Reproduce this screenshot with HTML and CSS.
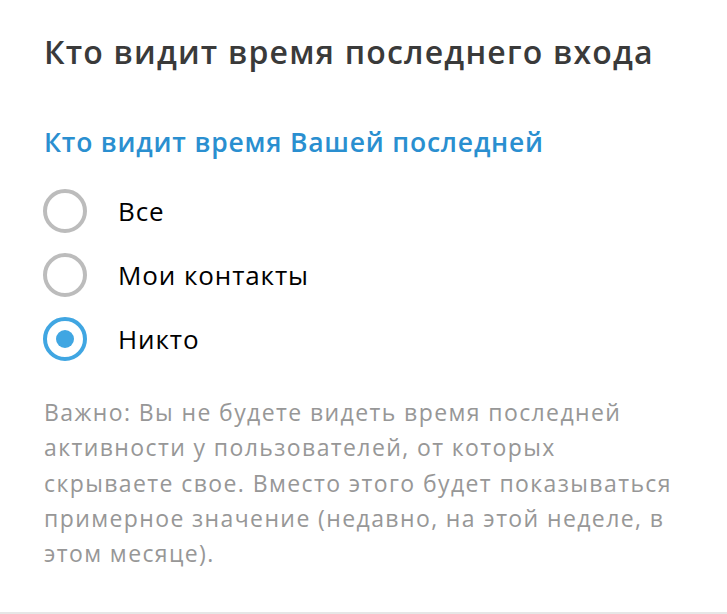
FILE: index.html
```html
<!DOCTYPE html>
<html lang="ru">
<head>
<meta charset="utf-8">
<title>Кто видит время последнего входа</title>
<link rel="stylesheet" href="styles.css">
</head>
<body>
<div class="panel">
  <h1 class="title">Кто видит время последнего входа</h1>
  <h2 class="subtitle">Кто видит время Вашей последней</h2>
  <div class="options">
    <div class="option"><span class="radio"></span><span class="label">Все</span></div>
    <div class="option"><span class="radio"></span><span class="label">Мои контакты</span></div>
    <div class="option"><span class="radio checked"></span><span class="label">Никто</span></div>
  </div>
  <p class="note">Важно: Вы не будете видеть время последней активности у пользователей, от которых скрываете свое. Вместо этого будет показываться примерное значение (недавно, на этой неделе, в этом месяце).</p>
</div>
</body>
</html>
```
FILE: styles.css
```css
html, body {
  margin: 0;
  padding: 0;
  background: #ffffff;
}
body {
  font-family: "Open Sans", "Liberation Sans", sans-serif;
}
.panel {
  box-sizing: border-box;
  height: 614px;
  padding: 32px 40px 0 44px;
  border-bottom: 2px solid #e6e6e6;
}
.title {
  margin: 0;
  font-size: 32px;
  line-height: 40px;
  font-weight: 600;
  letter-spacing: 1.2px;
  color: #3a3a3a;
}
.subtitle {
  margin: 53px 0 0 0;
  font-size: 26.5px;
  line-height: 34px;
  font-weight: 600;
  letter-spacing: 0.8px;
  color: #2a8fd0;
}
.options {
  margin-top: 20px;
  display: flex;
  flex-direction: column;
}
.option {
  height: 64px;
  display: flex;
  align-items: center;
}
.radio {
  box-sizing: border-box;
  width: 44px;
  height: 44px;
  margin-left: -1px;
  border: 4px solid #bcbcbc;
  border-radius: 50%;
  display: flex;
  align-items: center;
  justify-content: center;
  flex: none;
}
.radio.checked {
  border-color: #40a6e2;
}
.radio.checked::after {
  content: "";
  width: 18px;
  height: 18px;
  border-radius: 50%;
  background: #40a6e2;
}
.label {
  margin-left: 31px;
  font-size: 26px;
  line-height: 60px;
  letter-spacing: 0.9px;
  color: #000000;
}
.note {
  margin: 24px 0 0 0;
  font-size: 23px;
  line-height: 35.3px;
  letter-spacing: 1.4px;
  color: #979797;
}
```
